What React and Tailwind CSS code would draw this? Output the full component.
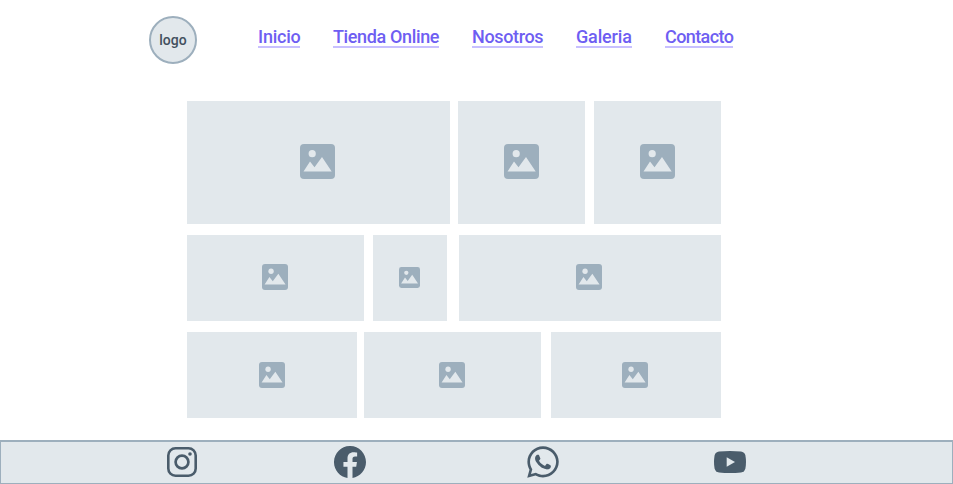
import { FaWhatsapp } from "react-icons/fa";
import { BsFacebook } from "react-icons/bs";

const links = [
  { label: "Inicio", style: "w-[42px] tracking-[-0.22px]" },
  { label: "Tienda Online", style: "w-[106px] tracking-[-0.36px]" },
  { label: "Nosotros", style: "w-[71px] tracking-[-0.36px]" },
  { label: "Galeria", style: "w-[56px] tracking-[-0.16px]" },
  { label: "Contacto", style: "w-[68px] tracking-[-0.6px]" },
];

const rows = [
  {
    style: "h-[122.5px] grid-cols-[262.5px_127px_127px] gap-x-[8.75px]",
    icons: ["size-[35px]", "size-[35px]", "size-[35px]"],
  },
  {
    style: "mt-[11px] h-[86px] grid-cols-[186px_85.500px_262px]",
    icons: ["size-[26px]", "size-[21px]", "size-[26px]"],
    cells: ["w-[177px]", "w-[74px]", "w-[262px]"],
  },
  {
    style: "mt-[11.5px] h-[86px] grid-cols-[177px_186.500px_170px]",
    icons: ["size-[26px]", "size-[26px]", "size-[26px]"],
    cells: ["w-[170px]", "w-[177px]", "w-[170px]"],
  },
];

function ImageIcon({ className }) {
  return (
    <svg viewBox="0 0 35 35" className={className}>
      <rect width="35" height="35" rx="4" fill="#9dafbd" />
      <circle cx="12.2" cy="9.7" r="3.6" fill="#e2e8ec" />
      <path d="M3.5 27.5 10 17.5l4.5 5.800 7.500-10.300 9.700 14.500Z" fill="#e2e8ec" />
    </svg>
  );
}

function Instagram() {
  return (
    <svg viewBox="0 0 30 30" className="size-[30px]" fill="none" stroke="#4a5c6b">
      <rect x="1.3" y="1.3" width="27.4" height="27.4" rx="7.2" strokeWidth="2.6" />
      <circle cx="15" cy="15" r="6.4" strokeWidth="2.7" />
      <circle cx="23" cy="7" r="1.8" fill="#4a5c6b" stroke="none" />
    </svg>
  );
}

function Youtube() {
  return (
    <svg viewBox="0 0 32 22" className="h-[22px] w-8">
      <path
        d="M5 .6Q16-.6 27 .6 30.5 1 31.4 4.5q1.2 6.5 0 13Q30.5 21 27 21.4 16 22.6 5 21.4 1.500 21 .6 17.500q-1.200-6.500 0-13Q1.500 1 5 .6Z"
        fill="#4a5c6b"
      />
      <path d="m12.700 6.300 8.300 4.700-8.300 4.700Z" fill="#e2e8ec" />
    </svg>
  );
}

export default function App() {
  return (
    <div className="flex h-[484px] w-[953px] flex-col overflow-hidden bg-white font-['Roboto','Liberation_Sans',sans-serif]">
      <header className="flex h-[101px] shrink-0 items-start pl-[149px] pt-4">
        <div className="flex size-12 items-center justify-center rounded-full border-2 border-[#9dafbd] bg-[#e2e8ec] text-[14px] font-medium text-[#42505e]">
          logo
        </div>
        <nav className="ml-[61px] mt-[11px] flex gap-[33px] text-lg font-medium leading-[19px] text-[#6e5ef2]">
          {links.map(({ label, style }) => (
            <a key={label} href="#" className={`h-[21px] whitespace-nowrap border-b-2 border-[#c8c0ff] ${style}`}>
              {label}
            </a>
          ))}
        </nav>
      </header>
      <main className="ml-[187px] h-[339px] w-[534px] shrink-0">
        {rows.map(({ style, icons, cells }, r) => (
          <div key={r} className={`grid ${style}`}>
            {icons.map((size, i) => (
              <div key={i} className={`flex items-center justify-center bg-[#e2e8ec] pb-px pr-px ${cells ? cells[i] : ""}`}>
                <ImageIcon className={size} />
              </div>
            ))}
          </div>
        ))}
      </main>
      <footer className="flex h-11 shrink-0 items-center border border-t-2 border-[#9dafbd] bg-[#e2e8ec] pb-[2px] pl-[166px] text-[#4a5c6b]">
        <Instagram />
        <BsFacebook className="ml-[137px] size-8" />
        <FaWhatsapp className="ml-[159px] size-9" />
        <div className="ml-[153px]">
          <Youtube />
        </div>
      </footer>
    </div>
  );
}
